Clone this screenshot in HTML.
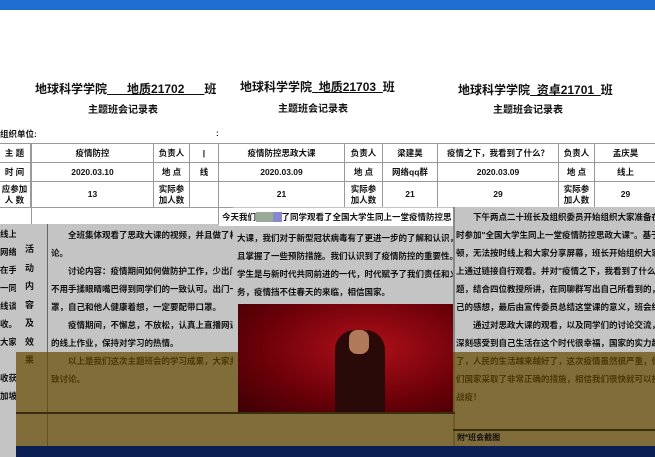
<!DOCTYPE html>
<html><head><meta charset="utf-8"><style>
*{margin:0;padding:0;box-sizing:border-box}
body{width:655px;height:457px;overflow:hidden;background:#fff;position:relative;font-family:"Liberation Sans","Noto Sans CJK SC",sans-serif;font-weight:bold;color:#111}
.a{position:absolute;white-space:nowrap}
.t{font-size:12px}
.s{font-size:10px}
.c{font-size:8.5px;text-align:center;display:flex;align-items:center;justify-content:center;border:1px solid #999;background:#fff;line-height:11px}
.p{font-size:8.5px;line-height:18px;overflow:hidden}
</style></head><body>
<div class="a" style="left:0;top:0;width:655px;height:10px;background:#1f6fd1"></div>

<div class="a t" style="left:35px;top:80px">地球科学学院<u>&nbsp;&nbsp;&nbsp;&nbsp;&nbsp;&nbsp;地质21702&nbsp;&nbsp;&nbsp;&nbsp;&nbsp;&nbsp;</u>班</div>
<div class="a s" style="left:88px;top:101px">主题班会记录表</div>
<div class="a t" style="left:240px;top:78px">地球科学学院<u>_地质21703_</u>班</div>
<div class="a s" style="left:278px;top:100px">主题班会记录表</div>
<div class="a t" style="left:458px;top:81px">地球科学学院<u>_资卓21701_</u>班</div>
<div class="a s" style="left:493px;top:101px">主题班会记录表</div>
<div class="a" style="left:0;top:128px;font-size:8.5px">组织单位:</div>
<div class="a" style="left:216px;top:128px;font-size:8.5px">:</div>

<div class="a c" style="left:-2px;top:143px;width:33px;height:20px">主 题</div>
<div class="a c" style="left:31px;top:143px;width:123px;height:20px">疫情防控</div>
<div class="a c" style="left:153px;top:143px;width:37px;height:20px">负责人</div>
<div class="a c" style="left:189px;top:143px;width:30px;height:20px">|</div>
<div class="a c" style="left:-2px;top:162px;width:33px;height:20px">时 间</div>
<div class="a c" style="left:31px;top:162px;width:123px;height:20px">2020.03.10</div>
<div class="a c" style="left:153px;top:162px;width:37px;height:20px">地 点</div>
<div class="a c" style="left:189px;top:162px;width:30px;height:20px">线</div>
<div class="a c" style="left:-2px;top:181px;width:33px;height:27px">应参加<br>人 数</div>
<div class="a c" style="left:31px;top:181px;width:123px;height:27px">13</div>
<div class="a c" style="left:153px;top:181px;width:37px;height:27px">实际参<br>加人数</div>
<div class="a c" style="left:189px;top:181px;width:30px;height:27px"></div>
<div class="a c" style="left:31px;top:207px;width:188px;height:20px"></div>
<div class="a c" style="left:218px;top:143px;width:127px;height:20px">疫情防控思政大课</div>
<div class="a c" style="left:344px;top:143px;width:39px;height:20px">负责人</div>
<div class="a c" style="left:382px;top:143px;width:56px;height:20px">梁建昊</div>
<div class="a c" style="left:218px;top:162px;width:127px;height:20px">2020.03.09</div>
<div class="a c" style="left:344px;top:162px;width:39px;height:20px">地 点</div>
<div class="a c" style="left:382px;top:162px;width:56px;height:20px">网络qq群</div>
<div class="a c" style="left:218px;top:181px;width:127px;height:27px">21</div>
<div class="a c" style="left:344px;top:181px;width:39px;height:27px">实际参<br>加人数</div>
<div class="a c" style="left:382px;top:181px;width:56px;height:27px">21</div>
<div class="a c" style="left:437px;top:143px;width:122px;height:20px">疫情之下，我看到了什么？</div>
<div class="a c" style="left:558px;top:143px;width:37px;height:20px">负责人</div>
<div class="a c" style="left:594px;top:143px;width:63px;height:20px">孟庆昊</div>
<div class="a c" style="left:437px;top:162px;width:122px;height:20px">2020.03.09</div>
<div class="a c" style="left:558px;top:162px;width:37px;height:20px">地 点</div>
<div class="a c" style="left:594px;top:162px;width:63px;height:20px">线上</div>
<div class="a c" style="left:437px;top:181px;width:122px;height:27px">29</div>
<div class="a c" style="left:558px;top:181px;width:37px;height:27px">实际参<br>加人数</div>
<div class="a c" style="left:594px;top:181px;width:63px;height:27px">29</div>

<div class="a" style="left:0;top:224px;width:235px;height:233px;background:#c4c4c4"></div>
<div class="a" style="left:47px;top:224px;width:1px;height:222px;background:#666"></div>
<div class="a p" style="left:0;top:225px;width:16px">线上时<br>网络卡<br>在手机<br>一同<br>线谈自<br>收。<br>大家<br><br>收获<br>加坡</div>
<div class="a" style="left:25px;top:240px;font-size:9px;line-height:18.5px;white-space:normal;width:10px">活<br>动<br>内<br>容<br>及<br>效<br>果</div>
<div class="a p" style="left:51px;top:226px;width:182px">　　全班集体观看了思政大课的视频，并且做了相<br>论。<br>　　讨论内容：疫情期间如何做防护工作，少出门<br>不用手揉眼睛嘴巴得到同学们的一致认可。出门一定<br>罩，自己和他人健康着想，一定要配带口罩。<br>　　疫情期间，不懈怠，不放松，认真上直播网课<br>的线上作业，保持对学习的热情。<br>　　以上是我们这次主题班会的学习成果，大家共<br>致讨论。</div>
<div class="a" style="left:233px;top:207px;width:220px;height:250px;background:#c4c4c4"></div>
<div class="a" style="left:219px;top:208px;width:236px;height:18px;background:#fff"></div>
<div class="a p" style="left:222px;top:208px;width:231px">今天我们<span style="background:#9a9;color:#9a9">▇▇</span><span style="background:#88c;color:#88c">▇</span>了同学观看了全国大学生同上一堂疫情防控思</div>
<div class="a p" style="left:237px;top:229px;width:216px">大课，我们对于新型冠状病毒有了更进一步的了解和认识，<br>且掌握了一些预防措施。我们认识到了疫情防控的重要性。<br>学生是与新时代共同前进的一代，时代赋予了我们责任和义<br>务，疫情挡不住春天的来临，相信国家。</div>
<div class="a" style="left:453px;top:207px;width:2px;height:240px;background:#888"></div>
<div class="a" style="left:455px;top:207px;width:200px;height:250px;background:#c4c4c4"></div>
<div class="a p" style="left:456px;top:208px;width:199px">　　下午两点二十班长及组织委员开始组织大家准备在线<br>时参加"全国大学生同上一堂疫情防控思政大课"。基于网<br>顿，无法按时线上和大家分享屏幕，班长开始组织大家在<br>上通过链接自行观看。并对"疫情之下，我看到了什么"这<br>题，结合四位教授所讲，在同聊群写出自己所看到的，说<br>己的感想，最后由宣传委员总结这堂课的意义，班会结束<br>　　通过对思政大课的观看，以及同学们的讨论交流，大<br>深刻感受到自己生活在这个时代很幸福，国家的实力越来<br>了，人民的生活越来越好了，这次疫情虽然很严重，但<br>们国家采取了非常正确的措施，相信我们很快就可以打赢<br>战疫！</div>
<div class="a" style="left:16px;top:352px;width:639px;height:94px;background:rgba(100,72,0,.7)"></div>
<div class="a" style="left:238px;top:304px;width:215px;height:109px;background:radial-gradient(ellipse at 60% 40%,#b0101a,#6a0008 60%,#3a0004)"></div>
<div class="a" style="left:335px;top:330px;width:50px;height:83px;background:#2a0a08;border-radius:20px 20px 0 0"></div>
<div class="a" style="left:349px;top:330px;width:20px;height:24px;background:#b07a5a;border-radius:8px"></div>
<div class="a" style="left:16px;top:412px;width:439px;height:2px;background:#3a2e10"></div>
<div class="a" style="left:453px;top:429px;width:202px;height:2px;background:#3a2e10"></div>
<div class="a" style="left:457px;top:432px;font-size:8px">附*班会截图</div>
<div class="a" style="left:16px;top:446px;width:639px;height:11px;background:#0b1f55"></div>
<div class="a" style="left:0;top:448px;width:16px;height:9px;background:#c4c4c4"></div>
</body></html>
